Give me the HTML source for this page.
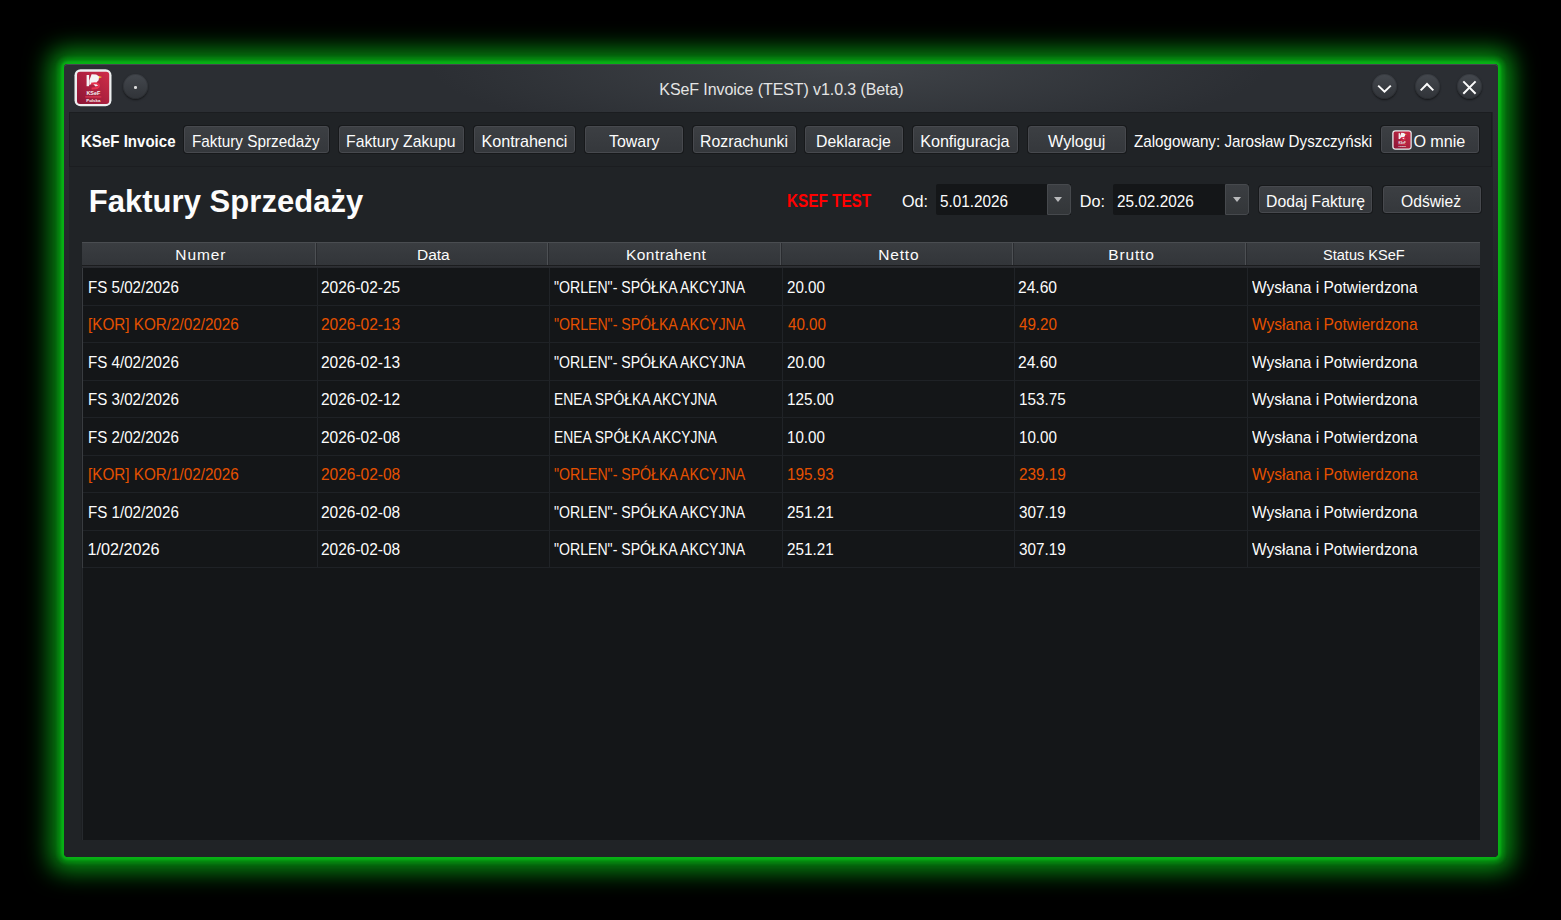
<!DOCTYPE html>
<html><head><meta charset="utf-8">
<style>
*{box-sizing:border-box;margin:0;padding:0}
html,body{width:1561px;height:920px;background:#000;overflow:hidden;font-family:"Liberation Sans",sans-serif;color:#fcfcfc}
.a{position:absolute}
.x{position:absolute;white-space:nowrap;transform-origin:0 0}
#win{position:absolute;left:64px;top:64px;width:1434px;height:793px;background:linear-gradient(#2b2e33 0px,#2b2e33 48px,#292c30 100px,#202326 260px);border-radius:4px;
 box-shadow:0 0 2.5px 3px rgba(9,192,24,0.727),0 0 3px 6.5px rgba(9,192,24,0.236),0 0 24.6px 13.1px rgba(9,192,24,0.765)}
#title{position:absolute;left:64px;top:64px;width:1434px;height:48px;background:radial-gradient(ellipse 420px 80px at 785px 0px,#404449,#2b2e33);border-radius:4px 4px 0 0;box-shadow:inset 0 1px 0 #46474f}
.tb{position:absolute;width:25px;height:25px;border-radius:50%;background:linear-gradient(#44484e,#303338);box-shadow:inset 0 0 0 1px rgba(0,0,0,.15),0 1px 2px rgba(0,0,0,.55)}
.btn{position:absolute;top:126px;height:27px;border-radius:3px;background:linear-gradient(#3c3f43,#35383c);border:1px solid #47494e;box-shadow:0 0 0 1px #17191b}
.hd{position:absolute;top:242px;height:23px;background:linear-gradient(#3a3d41,#323539);border-top:1px solid #4a4d51}
.sep{position:absolute;top:243px;width:2px;height:22px;background:#2a2c30;border-left:1px solid #4d5054}
.vg{position:absolute;top:268px;width:1px;height:300px;background:#202327}
.hg{position:absolute;left:83px;width:1397px;height:1px;background:#1f2226}
.dd{position:absolute;top:184px;width:24px;height:31px;background:linear-gradient(#3b3e42,#333639);border:1px solid #46494d;border-radius:0 3px 3px 0}
.arr{position:absolute;width:0;height:0;border-left:4.5px solid transparent;border-right:4.5px solid transparent;border-top:5px solid #b8b9bb}
</style></head><body>
<div id="win"></div>
<div id="title"></div>
<!-- app icon -->
<svg class="a" style="left:74px;top:69px" width="38" height="38" viewBox="0 0 38 38">
<defs><linearGradient id="rg" x1="0" y1="1" x2="1" y2="0"><stop offset="0" stop-color="#8a1535"/><stop offset="1" stop-color="#d02d48"/></linearGradient></defs>
<rect x="0.5" y="0.3" width="37" height="37" rx="6" fill="#eceeef"/>
<rect x="3" y="2.8" width="32.2" height="32.2" rx="3" fill="url(#rg)"/>
<rect x="12.6" y="6" width="2.5" height="11.2" fill="#f4f4f4"/>
<path d="M15.3 11.5 L17.6 5.3 L22.2 5.6 L25.2 7.6 L24.6 11.2 L22.4 13.6 L24.2 16.8 L21.6 17.6 L18.6 14.6 L15.3 16 Z" fill="#f4f4f4"/>
<path d="M24.9 7 L28 8 L24.9 9.4 Z" fill="#f2c230"/>
<path d="M17.2 14.8 Q23.8 13.4 25 16.4 Q25.6 19.6 17.6 19.4" fill="none" stroke="#e8334f" stroke-width="2"/>
<text x="19.3" y="26.4" font-family="Liberation Sans" font-weight="bold" font-size="5.4" fill="#f4f4f4" text-anchor="middle">KSeF</text>
<rect x="11.3" y="27.3" width="16" height="1.2" fill="#e03a55"/>
<text x="19.3" y="32.9" font-family="Liberation Sans" font-weight="bold" font-size="4.4" fill="#f4f4f4" text-anchor="middle">Polska</text>
</svg>
<div class="tb" style="left:123px;top:74.2px"></div>
<div class="a" style="left:134.2px;top:86px;width:2.6px;height:2.6px;border-radius:50%;background:#ddd"></div>
<div class="tb" style="left:1372px;top:74.2px"></div>
<div class="tb" style="left:1414.5px;top:74.2px"></div>
<div class="tb" style="left:1457px;top:74.2px"></div>
<svg class="a" style="left:1360px;top:70px" width="130" height="36" viewBox="1360 70 130 36">
<path d="M1378.2 85.6 L1384.5 91.6 L1390.8 85.6" fill="none" stroke="#fcfcfc" stroke-width="2"/>
<path d="M1420.7 90.4 L1427 84 L1433.3 90.4" fill="none" stroke="#fcfcfc" stroke-width="2"/>
<path d="M1463.3 81.4 L1475.6 93.7 M1475.6 81.4 L1463.3 93.7" fill="none" stroke="#fcfcfc" stroke-width="2"/>
</svg>

<!-- content -->
<div class="a" style="left:69px;top:112px;width:1424px;height:740px;background:#202326"></div>
<div class="a" style="left:69px;top:112px;width:1423px;height:55px;border:1px solid #1b1d20;border-left-color:#1b1d20"></div>
<div class="btn" style="left:184px;width:145px"></div>
<div class="btn" style="left:339px;width:125px"></div>
<div class="btn" style="left:474px;width:101px"></div>
<div class="btn" style="left:585px;width:98px"></div>
<div class="btn" style="left:693px;width:103px"></div>
<div class="btn" style="left:805px;width:98px"></div>
<div class="btn" style="left:913px;width:105px"></div>
<div class="btn" style="left:1028px;width:98px"></div>
<div class="btn" style="left:1381px;width:98px"></div>
<svg class="a" style="left:1392px;top:130px" width="20" height="20" viewBox="0 0 38 38">

<rect x="0.5" y="0.3" width="37" height="37" rx="6" fill="#eceeef"/>
<rect x="3" y="2.8" width="32.2" height="32.2" rx="3" fill="url(#rg)"/>
<rect x="12.6" y="6" width="2.5" height="11.2" fill="#f4f4f4"/>
<path d="M15.3 11.5 L17.6 5.3 L22.2 5.6 L25.2 7.6 L24.6 11.2 L22.4 13.6 L24.2 16.8 L21.6 17.6 L18.6 14.6 L15.3 16 Z" fill="#f4f4f4"/>
<path d="M24.9 7 L28 8 L24.9 9.4 Z" fill="#f2c230"/>
<path d="M17.2 14.8 Q23.8 13.4 25 16.4 Q25.6 19.6 17.6 19.4" fill="none" stroke="#e8334f" stroke-width="2"/>
<text x="19.3" y="26.4" font-family="Liberation Sans" font-weight="bold" font-size="5.4" fill="#f4f4f4" text-anchor="middle">KSeF</text>
<rect x="11.3" y="27.3" width="16" height="1.2" fill="#e03a55"/>
<text x="19.3" y="32.9" font-family="Liberation Sans" font-weight="bold" font-size="4.4" fill="#f4f4f4" text-anchor="middle">Polska</text>
</svg>

<div class="a" style="left:936px;top:184px;width:135px;height:31px;background:#141618;border-radius:2px 0 0 2px"></div>
<div class="dd" style="left:1047px"></div>
<div class="arr" style="left:1054px;top:197px"></div>
<div class="a" style="left:1113px;top:184px;width:136px;height:31px;background:#141618;border-radius:2px 0 0 2px"></div>
<div class="dd" style="left:1225px"></div>
<div class="arr" style="left:1232.5px;top:197px"></div>
<div class="btn" style="left:1259px;top:186px;width:113px"></div>
<div class="btn" style="left:1383px;top:186px;width:98px"></div>

<!-- table -->
<div class="a" style="left:82px;top:268px;width:1398px;height:572px;background:#141618;border-left:1px solid #26292d;box-shadow:-1px 0 0 #1d1f22"></div>
<div class="a" style="left:82px;top:268px;width:1px;height:300px;background:#393c40"></div>
<div class="hd" style="left:82px;width:1398px"></div>
<div class="sep" style="left:315px"></div>
<div class="sep" style="left:547px"></div>
<div class="sep" style="left:780px"></div>
<div class="sep" style="left:1012px"></div>
<div class="sep" style="left:1245px"></div>
<div class="a" style="left:82px;top:265px;width:1398px;height:3px;background:linear-gradient(#1b1c1e 0px,#1b1c1e 1px,#303236 1px,#26282c 3px)"></div>
<div class="vg" style="left:317px"></div>
<div class="vg" style="left:549px"></div>
<div class="vg" style="left:782px"></div>
<div class="vg" style="left:1014px"></div>
<div class="vg" style="left:1247px"></div>
<div class="hg" style="top:305px"></div>
<div class="hg" style="top:342px"></div>
<div class="hg" style="top:380px"></div>
<div class="hg" style="top:417px"></div>
<div class="hg" style="top:455px"></div>
<div class="hg" style="top:492px"></div>
<div class="hg" style="top:530px"></div>
<div class="hg" style="top:567px"></div>
<div class="x" style="left:659.3px;top:81.5px;font-size:16px;line-height:16px;letter-spacing:-0.09px;color:#e4e4e4">KSeF Invoice (TEST) v1.0.3 (Beta)</div>
<div class="x" style="left:81.1px;top:132.5px;font-size:16.2px;line-height:16.2px;transform:scaleX(0.9300);font-weight:700">KSeF Invoice</div>
<div class="x" style="left:192.4px;top:132.5px;font-size:16.2px;line-height:16.2px;transform:scaleX(0.9455)">Faktury Sprzedaży</div>
<div class="x" style="left:346.4px;top:132.5px;font-size:16.2px;line-height:16.2px;transform:scaleX(0.9748)">Faktury Zakupu</div>
<div class="x" style="left:481.5px;top:132.5px;font-size:16.2px;line-height:16.2px;letter-spacing:-0.05px">Kontrahenci</div>
<div class="x" style="left:609.0px;top:132.5px;font-size:16.2px;line-height:16.2px;transform:scaleX(0.9843)">Towary</div>
<div class="x" style="left:700.0px;top:132.5px;font-size:16.2px;line-height:16.2px;transform:scaleX(0.9773)">Rozrachunki</div>
<div class="x" style="left:816.4px;top:132.5px;font-size:16.2px;line-height:16.2px;transform:scaleX(0.9773)">Deklaracje</div>
<div class="x" style="left:920.2px;top:132.5px;font-size:16.2px;line-height:16.2px;letter-spacing:-0.05px">Konfiguracja</div>
<div class="x" style="left:1048.0px;top:132.5px;font-size:16.2px;line-height:16.2px">Wyloguj</div>
<div class="x" style="left:1134.1px;top:132.5px;font-size:16.2px;line-height:16.2px;transform:scaleX(0.9391)">Zalogowany: Jarosław Dyszczyński</div>
<div class="x" style="left:1413.4px;top:132.5px;font-size:16.2px;line-height:16.2px;letter-spacing:-0.08px">O mnie</div>
<div class="x" style="left:88.7px;top:186.3px;font-size:31px;line-height:31px;font-weight:700;letter-spacing:0.04px">Faktury Sprzedaży</div>
<div class="x" style="left:786.9px;top:192.2px;font-size:18px;line-height:18px;transform:scaleX(0.8500);font-weight:700;color:#ff0000">KSEF TEST</div>
<div class="x" style="left:902.0px;top:192.5px;font-size:16.2px;line-height:16.2px">Od:</div>
<div class="x" style="left:939.7px;top:192.5px;font-size:16.2px;line-height:16.2px;transform:scaleX(0.9451)">5.01.2026</div>
<div class="x" style="left:1079.7px;top:192.5px;font-size:16.2px;line-height:16.2px;letter-spacing:0.05px">Do:</div>
<div class="x" style="left:1117.3px;top:192.5px;font-size:16.2px;line-height:16.2px;transform:scaleX(0.9475)">25.02.2026</div>
<div class="x" style="left:1266.2px;top:192.5px;font-size:16.2px;line-height:16.2px;transform:scaleX(0.9740)">Dodaj Fakturę</div>
<div class="x" style="left:1401.0px;top:192.5px;font-size:16.2px;line-height:16.2px;transform:scaleX(0.9672)">Odśwież</div>
<div class="x" style="left:175.3px;top:247.0px;font-size:15.5px;line-height:15.5px;letter-spacing:0.93px">Numer</div>
<div class="x" style="left:417.1px;top:247.0px;font-size:15.5px;line-height:15.5px;letter-spacing:-0.10px">Data</div>
<div class="x" style="left:626.0px;top:247.0px;font-size:15.5px;line-height:15.5px;letter-spacing:0.44px">Kontrahent</div>
<div class="x" style="left:878.2px;top:247.0px;font-size:15.5px;line-height:15.5px;letter-spacing:0.85px">Netto</div>
<div class="x" style="left:1108.3px;top:247.0px;font-size:15.5px;line-height:15.5px;letter-spacing:0.84px">Brutto</div>
<div class="x" style="left:1322.9px;top:247.0px;font-size:15.5px;line-height:15.5px;transform:scaleX(0.9395)">Status KSeF</div>
<div class="x" style="left:87.7px;top:279.0px;font-size:16.2px;line-height:16.2px;transform:scaleX(0.9344)">FS 5/02/2026</div>
<div class="x" style="left:321.0px;top:279.0px;font-size:16.2px;line-height:16.2px;transform:scaleX(0.9556)">2026-02-25</div>
<div class="x" style="left:553.8px;top:279.0px;font-size:16.2px;line-height:16.2px;transform:scaleX(0.8716)">&quot;ORLEN&quot;- SPÓŁKA AKCYJNA</div>
<div class="x" style="left:786.6px;top:279.0px;font-size:16.2px;line-height:16.2px;transform:scaleX(0.9359)">20.00</div>
<div class="x" style="left:1018.4px;top:279.0px;font-size:16.2px;line-height:16.2px;transform:scaleX(0.9641)">24.60</div>
<div class="x" style="left:1251.6px;top:279.0px;font-size:16.2px;line-height:16.2px;transform:scaleX(0.9595)">Wysłana i Potwierdzona</div>
<div class="x" style="left:87.7px;top:316.0px;font-size:16.2px;line-height:16.2px;transform:scaleX(0.9415);color:#e65100">[KOR] KOR/2/02/2026</div>
<div class="x" style="left:321.0px;top:316.0px;font-size:16.2px;line-height:16.2px;transform:scaleX(0.9556);color:#e65100">2026-02-13</div>
<div class="x" style="left:553.8px;top:316.0px;font-size:16.2px;line-height:16.2px;transform:scaleX(0.8716);color:#e65100">&quot;ORLEN&quot;- SPÓŁKA AKCYJNA</div>
<div class="x" style="left:787.5px;top:316.0px;font-size:16.2px;line-height:16.2px;transform:scaleX(0.9359);color:#e65100">40.00</div>
<div class="x" style="left:1019.4px;top:316.0px;font-size:16.2px;line-height:16.2px;transform:scaleX(0.9359);color:#e65100">49.20</div>
<div class="x" style="left:1251.6px;top:316.0px;font-size:16.2px;line-height:16.2px;transform:scaleX(0.9595);color:#e65100">Wysłana i Potwierdzona</div>
<div class="x" style="left:87.7px;top:354.0px;font-size:16.2px;line-height:16.2px;transform:scaleX(0.9344)">FS 4/02/2026</div>
<div class="x" style="left:321.0px;top:354.0px;font-size:16.2px;line-height:16.2px;transform:scaleX(0.9556)">2026-02-13</div>
<div class="x" style="left:553.8px;top:354.0px;font-size:16.2px;line-height:16.2px;transform:scaleX(0.8716)">&quot;ORLEN&quot;- SPÓŁKA AKCYJNA</div>
<div class="x" style="left:786.6px;top:354.0px;font-size:16.2px;line-height:16.2px;transform:scaleX(0.9359)">20.00</div>
<div class="x" style="left:1018.4px;top:354.0px;font-size:16.2px;line-height:16.2px;transform:scaleX(0.9641)">24.60</div>
<div class="x" style="left:1251.6px;top:354.0px;font-size:16.2px;line-height:16.2px;transform:scaleX(0.9595)">Wysłana i Potwierdzona</div>
<div class="x" style="left:87.7px;top:391.0px;font-size:16.2px;line-height:16.2px;transform:scaleX(0.9344)">FS 3/02/2026</div>
<div class="x" style="left:321.0px;top:391.0px;font-size:16.2px;line-height:16.2px;transform:scaleX(0.9556)">2026-02-12</div>
<div class="x" style="left:553.8px;top:391.0px;font-size:16.2px;line-height:16.2px;transform:scaleX(0.8571)">ENEA SPÓŁKA AKCYJNA</div>
<div class="x" style="left:786.6px;top:391.0px;font-size:16.2px;line-height:16.2px;transform:scaleX(0.9437)">125.00</div>
<div class="x" style="left:1018.5px;top:391.0px;font-size:16.2px;line-height:16.2px;transform:scaleX(0.9437)">153.75</div>
<div class="x" style="left:1251.6px;top:391.0px;font-size:16.2px;line-height:16.2px;transform:scaleX(0.9595)">Wysłana i Potwierdzona</div>
<div class="x" style="left:87.7px;top:429.0px;font-size:16.2px;line-height:16.2px;transform:scaleX(0.9344)">FS 2/02/2026</div>
<div class="x" style="left:321.0px;top:429.0px;font-size:16.2px;line-height:16.2px;transform:scaleX(0.9556)">2026-02-08</div>
<div class="x" style="left:553.8px;top:429.0px;font-size:16.2px;line-height:16.2px;transform:scaleX(0.8571)">ENEA SPÓŁKA AKCYJNA</div>
<div class="x" style="left:786.6px;top:429.0px;font-size:16.2px;line-height:16.2px;transform:scaleX(0.9359)">10.00</div>
<div class="x" style="left:1018.5px;top:429.0px;font-size:16.2px;line-height:16.2px;transform:scaleX(0.9359)">10.00</div>
<div class="x" style="left:1251.6px;top:429.0px;font-size:16.2px;line-height:16.2px;transform:scaleX(0.9595)">Wysłana i Potwierdzona</div>
<div class="x" style="left:87.7px;top:466.0px;font-size:16.2px;line-height:16.2px;transform:scaleX(0.9415);color:#e65100">[KOR] KOR/1/02/2026</div>
<div class="x" style="left:321.0px;top:466.0px;font-size:16.2px;line-height:16.2px;transform:scaleX(0.9556);color:#e65100">2026-02-08</div>
<div class="x" style="left:553.8px;top:466.0px;font-size:16.2px;line-height:16.2px;transform:scaleX(0.8716);color:#e65100">&quot;ORLEN&quot;- SPÓŁKA AKCYJNA</div>
<div class="x" style="left:786.6px;top:466.0px;font-size:16.2px;line-height:16.2px;transform:scaleX(0.9437);color:#e65100">195.93</div>
<div class="x" style="left:1018.5px;top:466.0px;font-size:16.2px;line-height:16.2px;transform:scaleX(0.9437);color:#e65100">239.19</div>
<div class="x" style="left:1251.6px;top:466.0px;font-size:16.2px;line-height:16.2px;transform:scaleX(0.9595);color:#e65100">Wysłana i Potwierdzona</div>
<div class="x" style="left:87.7px;top:504.0px;font-size:16.2px;line-height:16.2px;transform:scaleX(0.9344)">FS 1/02/2026</div>
<div class="x" style="left:321.0px;top:504.0px;font-size:16.2px;line-height:16.2px;transform:scaleX(0.9556)">2026-02-08</div>
<div class="x" style="left:553.8px;top:504.0px;font-size:16.2px;line-height:16.2px;transform:scaleX(0.8716)">&quot;ORLEN&quot;- SPÓŁKA AKCYJNA</div>
<div class="x" style="left:786.6px;top:504.0px;font-size:16.2px;line-height:16.2px;transform:scaleX(0.9437)">251.21</div>
<div class="x" style="left:1018.5px;top:504.0px;font-size:16.2px;line-height:16.2px;transform:scaleX(0.9437)">307.19</div>
<div class="x" style="left:1251.6px;top:504.0px;font-size:16.2px;line-height:16.2px;transform:scaleX(0.9595)">Wysłana i Potwierdzona</div>
<div class="x" style="left:87.6px;top:541.0px;font-size:16.2px;line-height:16.2px">1/02/2026</div>
<div class="x" style="left:321.0px;top:541.0px;font-size:16.2px;line-height:16.2px;transform:scaleX(0.9556)">2026-02-08</div>
<div class="x" style="left:553.8px;top:541.0px;font-size:16.2px;line-height:16.2px;transform:scaleX(0.8716)">&quot;ORLEN&quot;- SPÓŁKA AKCYJNA</div>
<div class="x" style="left:786.6px;top:541.0px;font-size:16.2px;line-height:16.2px;transform:scaleX(0.9437)">251.21</div>
<div class="x" style="left:1018.5px;top:541.0px;font-size:16.2px;line-height:16.2px;transform:scaleX(0.9437)">307.19</div>
<div class="x" style="left:1251.6px;top:541.0px;font-size:16.2px;line-height:16.2px;transform:scaleX(0.9595)">Wysłana i Potwierdzona</div>
</body></html>
